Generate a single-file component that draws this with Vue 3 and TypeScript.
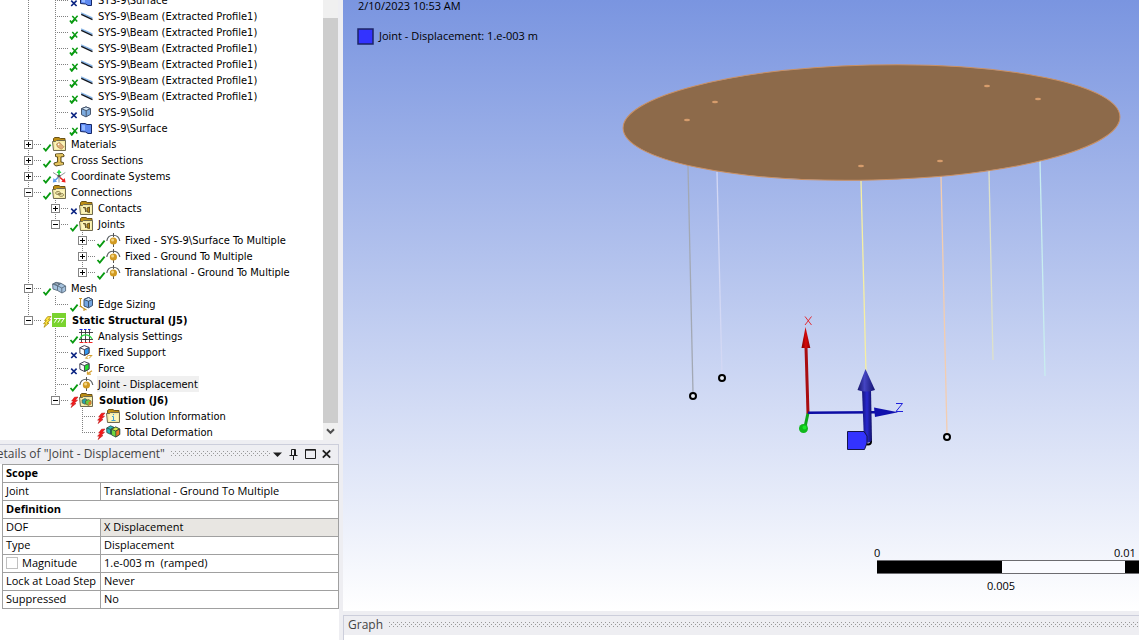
<script setup lang="ts">
type Status = 'check' | 'cross' | 'both' | 'bolt-yellow' | 'bolt-red'
interface Node {
  label: string
  icon: string
  status: Status
  level: number
  toggle?: 'plus' | 'minus'
  bold?: boolean
  selected?: boolean
  last?: boolean
  guides?: boolean[]
}

const beam = (): Node => ({ label: 'SYS-9\\Beam (Extracted Profile1)', icon: 'beam', status: 'both', level: 1, guides: [true] })

const nodes: Node[] = [
  { label: 'SYS-9\\Surface', icon: 'surface', status: 'cross', level: 1, guides: [true] },
  beam(), beam(), beam(), beam(), beam(), beam(),
  { label: 'SYS-9\\Solid', icon: 'solid', status: 'cross', level: 1, guides: [true] },
  { label: 'SYS-9\\Surface', icon: 'surface', status: 'both', level: 1, guides: [true], last: true },
  { label: 'Materials', icon: 'materials', status: 'check', level: 0, toggle: 'plus' },
  { label: 'Cross Sections', icon: 'section', status: 'check', level: 0, toggle: 'plus' },
  { label: 'Coordinate Systems', icon: 'axes', status: 'check', level: 0, toggle: 'plus' },
  { label: 'Connections', icon: 'connections', status: 'check', level: 0, toggle: 'minus' },
  { label: 'Contacts', icon: 'contacts', status: 'cross', level: 1, toggle: 'plus', guides: [true] },
  { label: 'Joints', icon: 'contacts', status: 'check', level: 1, toggle: 'minus', guides: [true], last: true },
  { label: 'Fixed - SYS-9\\Surface To Multiple', icon: 'joint', status: 'check', level: 2, toggle: 'plus', guides: [true, false] },
  { label: 'Fixed - Ground To Multiple', icon: 'joint', status: 'check', level: 2, toggle: 'plus', guides: [true, false] },
  { label: 'Translational - Ground To Multiple', icon: 'joint', status: 'check', level: 2, toggle: 'plus', guides: [true, false], last: true },
  { label: 'Mesh', icon: 'mesh', status: 'check', level: 0, toggle: 'minus' },
  { label: 'Edge Sizing', icon: 'sizing', status: 'check', level: 1, guides: [true], last: true },
  { label: 'Static Structural (J5)', icon: 'static', status: 'bolt-yellow', level: 0, toggle: 'minus', bold: true, last: true },
  { label: 'Analysis Settings', icon: 'analysis', status: 'check', level: 1, guides: [false] },
  { label: 'Fixed Support', icon: 'support', status: 'cross', level: 1, guides: [false] },
  { label: 'Force', icon: 'force', status: 'cross', level: 1, guides: [false] },
  { label: 'Joint - Displacement', icon: 'joint', status: 'check', level: 1, guides: [false], selected: true },
  { label: 'Solution (J6)', icon: 'solution', status: 'bolt-red', level: 1, toggle: 'minus', bold: true, guides: [false], last: true },
  { label: 'Solution Information', icon: 'info', status: 'bolt-red', level: 2, guides: [false, false] },
  { label: 'Total Deformation', icon: 'deformation', status: 'bolt-red', level: 2, guides: [false, false], last: true },
]

const folders = ['materials', 'connections', 'contacts', 'solution', 'info']

const beams = [
  { x1: 688, y1: 166, x2: 693, y2: 393, color: '#a2a8b4' },
  { x1: 717, y1: 172, x2: 722, y2: 375, color: '#d3d8f4' },
  { x1: 861, y1: 181, x2: 866, y2: 372, color: '#f6efa2' },
  { x1: 941, y1: 176, x2: 947, y2: 434, color: '#f3cdb0' },
  { x1: 989, y1: 171, x2: 993, y2: 360, color: '#dde1ca' },
  { x1: 1040, y1: 161, x2: 1045, y2: 376, color: '#c8edf0' },
]
const holes = [[687, 120], [715, 102], [987, 86], [1038, 99], [861, 166], [940, 161]]
const rings = [[693, 396], [722, 378], [947, 437]]
</script>

<template>
  <main class="app">
    <aside class="side">
      <section class="outline" aria-label="Outline">
        <ul class="tree" role="tree">
          <li v-for="(n, i) in nodes" :key="i" class="row" role="treeitem" :aria-selected="!!n.selected">
            <span v-for="(g, k) in n.guides" :key="k" class="cell" :class="{ line: g }"></span>
            <span class="cell branch" :class="{ last: n.last }">
              <button v-if="n.toggle" class="toggle" type="button" :aria-label="n.toggle === 'plus' ? 'Expand' : 'Collapse'">
                <svg width="9" height="9" viewBox="0 0 9 9" shape-rendering="crispEdges">
                  <rect x="0.5" y="0.5" width="8" height="8" fill="#fff" stroke="#848484" />
                  <path d="M2 4.5H7" stroke="#000" />
                  <path v-if="n.toggle === 'plus'" d="M4.5 2V7" stroke="#000" />
                </svg>
              </button>
            </span>
            <svg class="status" width="10" height="16" viewBox="0 0 10 16" fill="none">
              <path v-if="n.status === 'check'" d="M1.5 12L3.8 14.6L8.6 8.6" stroke="#089a10" stroke-width="1.8" />
              <path v-if="n.status === 'cross'" d="M2.2 8.6L7.6 14M7.6 8.6L2.2 14" stroke="#0b2482" stroke-width="1.6" />
              <template v-if="n.status === 'both'">
                <path d="M1 12.5L2.8 14.8L6 11" stroke="#089a10" stroke-width="1.9" />
                <path d="M3.3 8L8.2 13.6M8.6 7.8L3.3 13.8" stroke="#089a10" stroke-width="1.5" />
              </template>
              <path v-if="n.status === 'bolt-yellow'" d="M5.5 4.7L9 4.5L6.4 7.7H8.6L5 11H7L2 15.3L3.6 11.7H1.6L4.4 8.6H2.6Z" fill="#ffe43a" stroke="#a88b10" stroke-width="0.8" />
              <path v-if="n.status === 'bolt-red'" d="M5.5 5.2L9 5L6.4 8.2H8.6L5 11.5H7L2 15.6L3.6 12.2H1.6L4.4 9.1H2.6Z" fill="#f81818" stroke="#b31010" stroke-width="0.5" />
            </svg>
            <svg class="icon" width="16" height="16" viewBox="0 0 16 16" fill="none">
              <g v-if="folders.includes(n.icon)">
                <path d="M1.5 6V2.5L2.8 1.5H7L8.2 2.5H13V6Z" fill="#bd8e14" stroke="#6b5318" />
                <path d="M0.5 5.5H3.5L4.5 4.5H13.5V14.5H1.5Z" fill="#f5eba6" stroke="#6f6a50" />
                <path d="M3 6.5H12V13H3Z" fill="#fcf5bf" />
              </g>
              <g v-if="n.icon === 'materials'">
                <path d="M4.5 8L7.5 6.3L12 10.8L9.5 13.3L5.5 11Z" fill="#dcae78" stroke="#b07f47" stroke-width="0.7" /><circle cx="6.6" cy="8.4" r="0.8" fill="#fff" />
              </g>
              <g v-if="n.icon === 'connections'" stroke="#8a7c45" stroke-width="0.9">
                <ellipse cx="6" cy="9" rx="2.4" ry="1.5" /><ellipse cx="9.2" cy="10.9" rx="2.4" ry="1.5" /><path d="M5.5 9L9.6 10.9" />
              </g>
              <g v-if="n.icon === 'contacts'" stroke="#5c4a1c" stroke-width="0.9">
                <path d="M4 7.5H6.5V12" /><path d="M8 8L10.5 7V12.6L8 11.8Z" fill="#b78a18" /><path d="M4.8 8L8.4 12" stroke-width="0.7" />
              </g>
              <g v-if="n.icon === 'solution'">
                <path d="M3 8L6 6.5L8.5 8V11L6 12.3L3.2 11Z" fill="#27a3a8" stroke="#48603a" stroke-width="0.7" />
                <path d="M6.5 9L9.5 7.5L12 9V12L9.5 13.4L6.7 12Z" fill="#6fca3b" stroke="#60542c" stroke-width="0.7" /><path d="M9.5 10.2L12 9V12L9.5 13.4Z" fill="#e07a28" />
              </g>
              <path v-if="n.icon === 'info'" d="M6 8.5H7.5V12M5.5 12.5H9.5M7.5 6V7.2" stroke="#3fa1d5" />
              <g v-if="n.icon === 'beam'">
                <path d="M2.2 4.2L13.5 9.2V11L2.2 6.2Z" fill="#86b4e6" /><path d="M2.2 6.4L13.5 11.6" stroke="#11151d" stroke-width="1.2" />
              </g>
              <g v-if="n.icon === 'surface'">
                <path d="M1.5 3.5H6L8 4.5H12.5V13.5H9L6.5 12L1.5 11.5Z" fill="#5c88f0" stroke="#152766" /><path d="M3 5L6 5.2V10.5L3 10Z" fill="#94b8ff" />
              </g>
              <g v-if="n.icon === 'solid'" stroke="#47566e">
                <path d="M2.5 4.7L7 2.9L11.5 4.7V10.4L7 12.9L2.5 10.7Z" fill="#7dabdf" /><path d="M2.5 4.7L7 2.9L11.5 4.7L7.2 6.6Z" fill="#d5e8f8" /><path d="M7.2 6.6V12.6" />
              </g>
              <g v-if="n.icon === 'section'" stroke="#4f4216" stroke-width="0.9">
                <path d="M3.5 2L10.5 1.5L12 3V4.5L9 5V10L11.5 10.5V12.5L4 14L2 12.5V11L5.5 10V5L3.5 4.5Z" fill="#d6b043" /><path d="M4 3H11M3 12H11M7.3 5V10" stroke="#f3db87" />
              </g>
              <g v-if="n.icon === 'axes'">
                <path d="M7 8V4" stroke="#20d840" stroke-width="1.6" /><path d="M4.5 5L7 1.6L9.5 5Z" fill="#20d840" />
                <path d="M8 9.5L11.5 12.5" stroke="#ef2020" stroke-width="1.6" /><path d="M12.7 10L13.6 14.4L9.3 13.8Z" fill="#ef2020" />
                <path d="M6 9.5L3 12.5" stroke="#5c9cec" stroke-width="1.6" /><path d="M1.5 10L0.8 14.4L5 13.8Z" fill="#5c9cec" />
                <path d="M1 4.5L6.5 8M13.3 4.5L8 8M7 9.5V14.5" stroke="#888" stroke-width="0.9" /><path d="M5.5 7H8.5V9.5H5.5Z" fill="#555" />
              </g>
              <g v-if="n.icon === 'joint'">
                <path d="M0.8 9C2 1.3 12.4 1.3 13.8 9" stroke="#5b6165" stroke-width="1.2" /><path d="M7.5 1V5M7.5 12V15" stroke="#555" /><circle cx="7.4" cy="9" r="3.6" fill="#d19a22" /><circle cx="6.6" cy="7.9" r="1.5" fill="#f2d584" />
              </g>
              <g v-if="n.icon === 'mesh'" stroke="#596b7d" stroke-width="0.9">
                <path d="M0.6 4L4 2.3L9 3.3L13.6 6V11L10 13L5.5 10.5L1 9Z" fill="#a5c2de" /><path d="M0.6 4L5.5 5.8L9 3.3M5.5 5.8V10.5M5.5 5.8L9.8 8L13.6 6M9.8 8V13M3 3L7.8 4.5" /><path d="M1.5 4L4 3L7.8 3.8L5.5 5Z" fill="#e7f0f7" />
              </g>
              <g v-if="n.icon === 'sizing'">
                <path d="M1.5 2V10.5L7.5 14M0 2.5H3M0.5 10.5H3M5 12V15" stroke="#c89526" stroke-width="1.1" />
                <path d="M5 3.5L9.5 1.5L13.5 3.5V9.5L9.5 11.8L5 10Z" fill="#74a6e2" stroke="#39506f" /><path d="M5 3.5L9.5 1.5L13.5 3.5L9.5 5.2Z" fill="#c9e2f7" stroke="#39506f" /><path d="M9.5 5V11.5" stroke="#39506f" />
              </g>
              <g v-if="n.icon === 'static'">
                <path d="M0 1H14V15H0Z" fill="#7ad32f" /><path d="M2 6.5H12.5M5 6.5L2.4 10.6M8.5 6.5L5.9 10.6M12 6.5L9.4 10.6" stroke="#fff" />
              </g>
              <g v-if="n.icon === 'analysis'">
                <path d="M2.5 2V14M6.5 2V14M10.5 2V14M0 4.5H14M0 11.5H14" stroke="#333" stroke-width="0.9" /><path d="M0.5 1.5H3.5M5 1.5H7.5M9 1.5H11.5" stroke="#1720e8" /><path d="M0.5 14.5H4.5M5.5 14.5H8.5M9.5 14.5H13.5" stroke="#ef2222" /><path d="M0.8 11C3 5.5 10 5.5 13.2 11" stroke="#28d83c" stroke-width="1.1" />
              </g>
              <g v-if="n.icon === 'support' || n.icon === 'force'">
                <path d="M0.8 3.8L5.3 1.6L10 3.4V9.2L5.5 11.5L0.9 9.3Z" fill="#fff" stroke="#445" />
                <path d="M5.4 5.6L10 3.5V9.2L5.5 11.4Z" :fill="n.icon === 'force' ? '#22df2e' : '#3096f0'" stroke="#445" /><path d="M0.8 3.8L5.4 5.6" stroke="#445" />
                <path v-if="n.icon === 'support'" d="M9.5 11L6.5 14.3M13.3 11L10 14.5M9.5 11.5H13M6.5 14.2H9" stroke="#d5a030" />
                <path v-else d="M13 10.8L9 13.5M8.5 11.5V14.2H12" stroke="#d5a030" stroke-width="1.3" />
              </g>
              <g v-if="n.icon === 'deformation'" stroke="#29483c" stroke-width="0.8">
                <path d="M0.7 4L4.5 1.8L8 3.3V8.5L4.5 10.3L0.8 8.5Z" fill="#27b9ba" /><path d="M0.7 4L4.5 5.4V10M4.5 5.4L8 3.3" /><path d="M5.5 5.3L9.8 3L13.7 5V10.5L9.8 13L5.6 11Z" fill="#6ed83e" /><path d="M5.5 5.3L9.8 3L13.7 5L9.8 7Z" fill="#dcee49" /><path d="M9.8 7L13.7 5V10.5L9.8 13Z" fill="#ef7626" />
              </g>
            </svg>
            <span class="label" :class="{ bold: n.bold, selected: n.selected }">{{ n.label }}</span>
          </li>
        </ul>
        <div class="scroll">
          <div class="thumb"></div>
          <button class="down" type="button" aria-label="Scroll down">
            <svg width="9" height="7" viewBox="0 0 9 7" fill="none"><path d="M1 1.2L4.5 4.8L8 1.2" stroke="#505050" stroke-width="2" /></svg>
          </button>
        </div>
      </section>

      <section class="details">
        <header class="bar">
          <h2 class="cut">Details of "Joint - Displacement"</h2>
          <span class="grip"></span>
          <button type="button" aria-label="Menu"><svg width="9" height="12" viewBox="0 0 9 12"><path d="M0 4.5H9L4.5 9Z" fill="#1e1e1e" /></svg></button>
          <button type="button" aria-label="Pin"><svg width="9" height="12" viewBox="0 0 9 12" fill="none" stroke="#1e1e1e"><path d="M2.5 7V1.5H6.5V7M5.5 1.5V7M0.5 7.5H8.5M4.5 7.5V12" /></svg></button>
          <button type="button" aria-label="Maximize"><svg width="11" height="12" viewBox="0 0 11 12" fill="none" stroke="#1e1e1e"><path d="M0.5 1.5H10.5V10.5H0.5ZM0 2.2H11" /></svg></button>
          <button type="button" aria-label="Close"><svg width="9" height="12" viewBox="0 0 9 12" fill="none"><path d="M0.8 2.3L8.2 9.7M8.2 2.3L0.8 9.7" stroke="#1e1e1e" stroke-width="1.8" /></svg></button>
        </header>
        <div class="sheet">
          <table class="props">
            <colgroup><col class="c1" /><col /></colgroup>
            <tbody>
              <tr><th colspan="2" class="group">Scope</th></tr>
              <tr><th>Joint</th><td>Translational - Ground To Multiple</td></tr>
              <tr><th colspan="2" class="group">Definition</th></tr>
              <tr><th>DOF</th><td class="locked">X Displacement</td></tr>
              <tr><th>Type</th><td>Displacement</td></tr>
              <tr><th><label class="param"><input type="checkbox" />Magnitude</label></th><td>1.e-003 m&nbsp; (ramped)</td></tr>
              <tr><th>Lock at Load Step</th><td>Never</td></tr>
              <tr><th>Suppressed</th><td>No</td></tr>
            </tbody>
          </table>
        </div>
      </section>
    </aside>

    <section class="work">
      <svg class="scene" viewBox="343 0 796 611" preserveAspectRatio="xMinYMin meet" role="img" aria-label="Model view">
        <defs>
          <linearGradient id="shaft"><stop offset="0" stop-color="#15157c" /><stop offset="0.5" stop-color="#2828cf" /><stop offset="1" stop-color="#111168" /></linearGradient>
          <linearGradient id="cone"><stop offset="0" stop-color="#15156b" /><stop offset="0.4" stop-color="#4444c2" /><stop offset="1" stop-color="#121270" /></linearGradient>
          <linearGradient id="red"><stop offset="0" stop-color="#7d0000" /><stop offset="0.5" stop-color="#d80808" /><stop offset="1" stop-color="#8a0000" /></linearGradient>
        </defs>
        <text x="358" y="10">2/10/2023 10:53 AM</text>
        <rect x="358" y="29" width="15" height="15" fill="#3333ff" stroke="#1c2466" stroke-width="1.5" />
        <text x="379" y="40">Joint - Displacement: 1.e-003 m</text>

        <line v-for="b in beams" :key="b.x1" :x1="b.x1" :y1="b.y1" :x2="b.x2" :y2="b.y2" :stroke="b.color" stroke-width="1.3" />
        <ellipse cx="871.5" cy="122.5" rx="248.5" ry="57.5" transform="rotate(-1.34 871.5 122.5)" fill="#8d6a4a" stroke="#cb9163" />
        <ellipse v-for="h in holes" :key="h[0]" :cx="h[0]" :cy="h[1]" rx="3" ry="1.3" fill="#d69c6c" />
        <circle v-for="r in rings" :key="r[0]" :cx="r[0]" :cy="r[1]" r="3" fill="#e8edf5" stroke="#000" stroke-width="2" />

        <path d="M808 413L805 427" stroke="#0da51a" stroke-width="3" />
        <circle cx="803.5" cy="428.5" r="4.5" fill="#11b91d" /><circle cx="804.5" cy="427.5" r="2" fill="#18e82a" />
        <path d="M808 413.5L806 347" stroke="#a90d10" stroke-width="3" />
        <path d="M805.5 327L801.5 348H810.3Z" fill="url(#red)" />
        <path d="M808 412.8L875 412.2" stroke="#0c0ca4" stroke-width="2.6" />
        <path d="M874 407.5L898 412.2L875 417Z" fill="#1111ad" />
        <circle cx="868" cy="441.5" r="3" fill="#fff" stroke="#000" stroke-width="2" />
        <path d="M862 390H871L872 440Q869 445 864 441Z" fill="url(#shaft)" />
        <path d="M865.5 369L857.5 390Q866 393 875 390Z" fill="url(#cone)" />
        <path d="M847.5 431.5H864L867 436V443L864.5 449.5H847.5Z" fill="#3333ff" stroke="#15154a" />
        <path d="M805 316.5L811.5 325M811.5 316.5L805 325" stroke="#e31b20" stroke-width="0.9" fill="none" />
        <path d="M896 403.5H902.5L896 411.5H903" stroke="#2020dc" fill="none" />

        <rect x="877" y="561" width="262" height="12" fill="#fafbff" />
        <path d="M877 561H1002V573H877ZM1125 561H1139V573H1125Z" fill="#000" />
        <path d="M877 560.5H1139M877 573.5H1139" stroke="#6c6c70" />
        <text x="874" y="557">0</text>
        <text x="1114" y="557">0.01</text>
        <text x="987" y="590">0.005</text>
      </svg>
      <section class="graph">
        <header class="bar"><h2>Graph</h2><span class="grip"></span></header>
        <div class="plot"></div>
      </section>
    </section>
  </main>
</template>

<style>
html, body { margin: 0; background: #eeeef2; }
</style>

<style scoped>
.app {
  display: grid;
  grid-template-columns: minmax(0, 343fr) minmax(0, 796fr);
  height: 100vh;
  overflow: hidden;
  background: #eeeef2;
  color: #000;
  font-family: "Open Sans", "Noto Sans", sans-serif;
  font-size: 11px;
}
button { display: flex; align-items: center; justify-content: center; padding: 0; border: 0; background: none; }
.side { display: grid; grid-template-rows: minmax(0, 11fr) minmax(0, 5fr); min-height: 0; padding-right: 4px; }
.outline { display: flex; min-height: 0; padding-right: 1px; }
.tree {
  display: flex; flex: 1; flex-direction: column; justify-content: flex-end;
  min-width: 0; margin: 0; padding: 0 0 0 15px; overflow: hidden; list-style: none;
  background: #fff; font-family: "DejaVu Sans Condensed", "DejaVu Sans", sans-serif;
}
.row { display: flex; flex: none; height: 16px; white-space: nowrap; }
.cell { position: relative; flex: none; width: 27px; height: 16px; }
.line::before, .branch::before {
  content: ""; position: absolute; left: 13px; top: 0; width: 1px; height: 16px;
  background: repeating-linear-gradient(#808080 0 1px, transparent 1px 2px);
}
.branch.last::before { height: 9px; }
.branch::after {
  content: ""; position: absolute; left: 13px; right: 0; top: 8px; height: 1px;
  background: repeating-linear-gradient(90deg, #808080 0 1px, transparent 1px 2px);
}
.toggle { position: absolute; left: 9px; top: 4px; z-index: 1; }
.status, .icon { flex: none; }
.label { height: 16px; margin-left: 2px; padding: 0 1px; line-height: 18px; }
.bold { padding-left: 2px; font-weight: 700; }
.selected { background: #f0f0f0; }
.scroll { display: flex; flex-direction: column; width: 15px; padding-top: 18px; box-sizing: border-box; background: #f0f0f0; }
.thumb { flex: 1; background: #cdcdcd; }
.down { height: 17px; }

.details { display: flex; flex-direction: column; min-height: 0; padding-top: 4px; }
.bar {
  display: flex; flex: none; align-items: center; gap: 6px; box-sizing: border-box; height: 20px; padding: 0 7px 2px 0;
  border-top: 1px solid #cccedb; border-right: 1px solid #cccedb; overflow: hidden;
}
.bar h2 { margin: 0; font-size: 12px; font-weight: 400; line-height: 17px; color: #444; white-space: nowrap; }
.bar .cut { margin-left: -12px; }
.grip {
  flex: 1; height: 5px;
  background:
    radial-gradient(circle at 0.5px 0.5px, #999 0.6px, transparent 0.7px) 0 0 / 4px 4px,
    radial-gradient(circle at 0.5px 0.5px, #999 0.6px, transparent 0.7px) 2px 2px / 4px 4px;
}
.bar button + button { margin-left: 1px; }
.bar button:last-child { margin-left: 0; }
.details .grip { margin-right: -3px; }
.sheet { flex: 1; min-height: 0; padding-left: 2px; background: #fff; }
.props { width: 100%; table-layout: fixed; border-collapse: collapse; }
.c1 { width: 98px; }
.props th, .props td {
  height: 15px; padding: 0 3px 2px; border: 1px solid #a0a0a0; line-height: 15px;
  font-weight: 400; text-align: left; white-space: nowrap; overflow: hidden;
}
.props .group { font-weight: 700; }
.props .locked { background: #e8e6e2; }
.param { display: flex; align-items: center; gap: 4px; }
.param input { appearance: none; width: 12px; height: 12px; margin: 1px 0 0; border: 1px solid #c0c0c0; background: #fff; }

.work { display: flex; flex-direction: column; min-width: 0; min-height: 0; }
.scene { display: block; flex: 1; width: 100%; min-height: 0; background: linear-gradient(#7a95e0, #fff); }
.graph { flex: none; padding-top: 4px; }
.graph .bar { padding: 0 0 2px 4px; border-left: 1px solid #cccedb; border-right: 0; }
.plot { height: 5px; border-left: 1px solid #cccedb; background: #fff; }
</style>
